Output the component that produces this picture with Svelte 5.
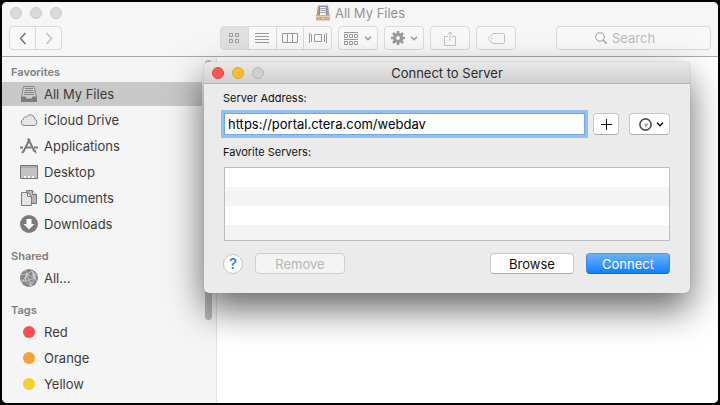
<script>
  let address = $state('https://portal.ctera.com/webdav');
  const favorites = [
    { name: 'All My Files', icon: 'files', selected: true },
    { name: 'iCloud Drive', icon: 'cloud' },
    { name: 'Applications', icon: 'apps' },
    { name: 'Desktop', icon: 'desktop' },
    { name: 'Documents', icon: 'docs' },
    { name: 'Downloads', icon: 'down' }
  ];
  const shared = [{ name: 'All...', icon: 'globe' }];
  const tags = [
    { name: 'Red', color: '#fc4e52' },
    { name: 'Orange', color: '#f8a032' },
    { name: 'Yellow', color: '#f5cf30' }
  ];
</script>

{#snippet icon(name)}
  <svg class="icon" viewBox="0 0 18 18" width="18" height="18" aria-hidden="true">
    {#if name === 'files'}
      <path d="M3.500 1.500h10.500l2.500 10v5H1.500v-5z" fill="#cacaca" stroke="#868686" />
      <path d="M5 3.500h8M5 5.500h8M4 7.500h10M4 9.500h10" stroke="#868686" />
      <path d="M1 11.500h4.500l1 2h5l1-2H17V17H1z" fill="#7d7d7d" />
    {:else if name === 'cloud'}
      <path d="M4 14.500a3.200 3.200 0 0 1-.6-6.200 2.400 2.400 0 0 1 3.300-2.400 4.300 4.300 0 0 1 8 2.400 3.200 3.200 0 0 1-.4 6.200z" fill="#e6e6e6" stroke="#858585" />
    {:else if name === 'apps'}
      <path d="M9.800 2L3 15.500M8 1.500l6.500 13" stroke="#7b7b7b" stroke-width="2" fill="none" />
      <path d="M0 10.500h3M5.500 10.500h6M14 10.500h4" stroke="#7b7b7b" stroke-width="2" />
      <path d="M2 14l-.5 3 2.500-2zM13.500 14l3 3-.5-4z" fill="#7b7b7b" />
    {:else if name === 'desktop'}
      <path d="M.5 2.500h17v13H.5z" fill="#c3c3c3" stroke="#777" />
      <path d="M1 4h16" stroke="#999" />
      <path d="M4 13h2v2H4zM8 13h2v2H8zM12 13h2v2h-2z" fill="#f5f5f5" />
    {:else if name === 'docs'}
      <path d="M6.500 1.500h6l4 4v9h-10z" fill="#b5b5b5" stroke="#7b7b7b" />
      <path d="M12.500 1.500v4h4" fill="#eee" stroke="#7b7b7b" />
      <path d="M1.500 3.500h6l4 4v9h-10z" fill="#e4e4e4" stroke="#7b7b7b" />
      <path d="M7.500 3.500v4h4z" fill="#f6f6f6" stroke="#7b7b7b" />
    {:else if name === 'down'}
      <circle cx="9" cy="9" r="9" fill="#7c7c7c" />
      <path d="M6.500 4h5v5h3L9 14.500 3.500 9h3z" fill="#fff" />
    {:else}
      <circle cx="9" cy="9" r="9" fill="#858585" />
      <path d="M1 6l6-1 8 4M5 1l2 4-2 7-4-1M5 12l6 5 4-8-3-7-5 3 2 6-4 1M9 11l6-2 2 4M9 11l2 6M7 5L2 14M12 2l5 5" stroke="#ddd" stroke-width=".7" fill="none" />
      <path d="M12 4l3 1 1 4-3-1zM5 7l2 1-1 3zM10 12l2 1-1 2z" fill="#c9c9c9" />
    {/if}
  </svg>
{/snippet}

{#snippet chevron()}
  <svg width="8" height="5" viewBox="0 0 8 5" aria-hidden="true"><path d="M1 .8l3 3 3-3" fill="none" stroke="currentColor" stroke-width="1.500" /></svg>
{/snippet}

<div class="screen">
  <main class="finder">
    <header>
      <div class="titlebar">
        <div class="lights"><button aria-label="Close window"></button><button aria-label="Minimize window"></button><button aria-label="Zoom window"></button></div>
        <h1>
          <svg width="16" height="16" viewBox="0 0 16 16" aria-hidden="true">
            <path d="M3 .5h10l1.500 10H1.500z" fill="#b59b80" /><path d="M4.500 1.500h7v9h-7z" fill="#f3f5fa" stroke="#8290a5" />
            <path d="M5 3.500h6M5 5.500h6M5 7.500h6" stroke="#9aa8bd" /><path d="M1 10h14v4.500a1 1 0 0 1-1 1H2a1 1 0 0 1-1-1z" fill="#cfae8a" />
            <path d="M1 11.500h14" stroke="#ead1b2" /><path d="M6 12.500h4v1.500H6z" fill="#fff3dc" stroke="#a98562" stroke-width=".5" />
          </svg>
          <span>All My Files</span>
        </h1>
      </div>
      <div class="toolbar">
        <div class="group nav">
          <button aria-label="Back"><svg width="8" height="13" viewBox="0 0 8 13"><path d="M6.500 1L1.500 6.500l5 5.500" fill="none" stroke="#727272" stroke-width="1.500" /></svg></button>
          <button aria-label="Forward"><svg width="8" height="13" viewBox="0 0 8 13"><path d="M1.500 1l5 5.500-5 5.500" fill="none" stroke="#c2c2c2" stroke-width="1.500" /></svg></button>
        </div>
        <div class="group views">
          <button class="active" aria-label="Icon view"><svg width="10" height="10" viewBox="0 0 10 10"><path d="M.5.5h3v3h-3zM6.500.5h3v3h-3zM.5 6.500h3v3h-3zM6.500 6.500h3v3h-3z" fill="none" stroke="currentColor" /></svg></button>
          <button aria-label="List view"><svg width="14" height="10" viewBox="0 0 14 10"><path d="M0 .5h14M0 3.500h14M0 6.500h14M0 9.500h14" stroke="currentColor" /></svg></button>
          <button aria-label="Column view"><svg width="16" height="10" viewBox="0 0 16 10"><path d="M.5.5h15v9H.5zM5.500.5v9M10.500.5v9" fill="none" stroke="currentColor" /></svg></button>
          <button aria-label="Cover Flow view"><svg width="18" height="10" viewBox="0 0 18 10"><path d="M.5 0v10M2.500 1v8M5.500 1.500h7v7h-7zM15.500 1v8M17.500 0v10" fill="none" stroke="currentColor" /></svg></button>
        </div>
        <button class="tool" aria-label="Arrange">
          <svg width="15" height="13" viewBox="0 0 15 13"><path d="M0 .5h14M0 7.500h14M.5 2.500h3v3h-3zM5.500 2.500h3v3h-3zM10.500 2.500h3v3h-3zM.5 9.500h3v3h-3zM5.500 9.500h3v3h-3zM10.500 9.500h3v3h-3z" fill="none" stroke="currentColor" /></svg>
          {@render chevron()}
        </button>
        <button class="tool" aria-label="Action">
          <svg width="14" height="14" viewBox="0 0 14 14"><circle cx="7" cy="7" r="3.500" fill="none" stroke="currentColor" stroke-width="3.200" /><path d="M7 0v3M7 11v3M0 7h3M11 7h3M2 2l2 2M10 10l2 2M12 2l-2 2M4 10l-2 2" stroke="currentColor" stroke-width="2.600" /></svg>
          {@render chevron()}
        </button>
        <button class="tool faint" aria-label="Share"><svg width="12" height="15" viewBox="0 0 12 15"><path d="M4 5.500H.5v9h11v-9H8M6 10V1M3.500 3.500L6 1l2.500 2.500" fill="none" stroke="currentColor" /></svg></button>
        <button class="tool faint" aria-label="Edit tags"><svg width="17" height="11" viewBox="0 0 17 11"><path d="M5 .5h10.500a1 1 0 0 1 1 1v8a1 1 0 0 1-1 1H5L.8 6.500a1.400 1.400 0 0 1 0-2z" fill="none" stroke="currentColor" /><circle cx="4" cy="5.500" r=".8" fill="currentColor" /></svg></button>
        <label class="search">
          <svg width="12" height="12" viewBox="0 0 12 12" aria-hidden="true"><circle cx="5" cy="5" r="4.300" fill="none" stroke="#9b9b9b" /><path d="M8 8l3.600 3.600" stroke="#9b9b9b" stroke-width="1.300" /></svg>
          <input type="text" placeholder="Search" aria-label="Search" />
        </label>
      </div>
    </header>
    <div class="body">
      <nav>
        <h2>Favorites</h2>
        {#each favorites as item}
          <a href="#{item.icon}" class:selected={item.selected}>{@render icon(item.icon)}{item.name}</a>
        {/each}
        <h2>Shared</h2>
        {#each shared as item}
          <a href="#{item.icon}">{@render icon(item.icon)}{item.name}</a>
        {/each}
        <h2>Tags</h2>
        {#each tags as tag}
          <a href="#{tag.name}"><span class="dot" style:background={tag.color}></span>{tag.name}</a>
        {/each}
      </nav>
      <div class="track"><div class="thumb"></div></div>
      <section aria-label="Files"></section>
    </div>
  </main>

  <form class="dialog" aria-label="Connect to Server" onsubmit={(e) => e.preventDefault()}>
    <div class="dialog-title">
      <div class="lights"><button type="button" class="red" aria-label="Close"></button><button type="button" class="amber" aria-label="Minimize"></button><button type="button" class="off" aria-label="Zoom" disabled></button></div>
      <h1>Connect to Server</h1>
    </div>
    <div class="content">
      <label for="address">Server Address:</label>
      <div class="address-row">
        <input id="address" type="text" bind:value={address} spellcheck="false" />
        <button type="button" class="push add" aria-label="Add to favorites"><svg width="11" height="11" viewBox="0 0 11 11"><path d="M5.500 0v11M0 5.500h11" stroke="#111" /></svg></button>
        <button type="button" class="push recent" aria-label="Recent servers">
          <svg width="13" height="13" viewBox="0 0 13 13"><circle cx="6.500" cy="6.500" r="5.600" fill="none" stroke="#505050" stroke-width="1.600" /><path d="M5.500 6.200h3.500M6.500 6.200v2.300l2-2" stroke="#777" stroke-width=".8" fill="none" /></svg>
          {@render chevron()}
        </button>
      </div>
      <h2 id="favorite-servers">Favorite Servers:</h2>
      <div class="list" role="listbox" tabindex="0" aria-labelledby="favorite-servers"></div>
      <div class="actions">
        <button type="button" class="help" aria-label="Help">?</button>
        <button type="button" class="push" disabled>Remove</button>
        <span class="spacer"></span>
        <button type="button" class="push">Browse</button>
        <button type="submit" class="push primary">Connect</button>
      </div>
    </div>
  </form>
</div>

<style>
  :global(body) { margin: 0; background: #000; }
  .screen { position: relative; box-sizing: border-box; height: 100vh; padding: 2px; overflow: hidden; background: #000; color: #3c3c3c; font: 13px/18px Inter, sans-serif; }
  .screen * { box-sizing: border-box; }
  button, input { margin: 0; padding: 0; font: inherit; color: inherit; }
  h1, h2 { margin: 0; font-weight: 400; }
  svg { flex: none; display: block; }
  .finder { display: flex; flex-direction: column; height: 100%; border-radius: 5px; overflow: hidden; background: #fff; }
  header { flex: none; height: 55px; border-bottom: 1px solid #a8a8a8; background: #f6f6f6; }
  .titlebar { position: relative; height: 24px; padding: 5px 8px; }
  .titlebar h1 { position: absolute; inset: 2px 0 auto; display: flex; align-items: center; justify-content: center; gap: 4px; color: #949494; font-size: 13px; line-height: 18px; }
  .lights { display: flex; gap: 8px; }
  .lights button { width: 12px; height: 12px; border: 1px solid #cacaca; border-radius: 50%; background: #dadada; }
  .lights .red { background: #fc5753; border-color: #e2443f; }
  .lights .amber { background: #fdbc2e; border-color: #e0a128; }
  .lights .off { background: #d0d0d0; border-color: #b8b8b8; }
  .toolbar { display: flex; align-items: center; padding: 0 7px; color: #9a9a9a; }
  .group, .tool, .search { display: flex; height: 24px; border: 1px solid #d9d9d9; border-radius: 4px; background: #f8f8f8; }
  .group { overflow: hidden; }
  .group button { display: grid; place-items: center; flex: 1; border: 0; background: none; }
  .group button + button { border-left: 1px solid #d9d9d9; }
  .nav { width: 53px; margin-right: 158px; }
  .views { width: 112px; }
  .group .active { background: #e0e0e0; }
  .tool { align-items: center; justify-content: center; gap: 5px; width: 40px; margin-left: 6px; }
  .faint { color: #c2c2c2; }
  .search { flex: 1; align-items: center; justify-content: center; gap: 5px; margin-left: 40px; padding-right: 14px; }
  .search input { width: 46px; border: 0; outline: 0; background: none; appearance: none; }
  .search input::placeholder { color: #b8b8b8; opacity: 1; }
  .body { display: flex; flex: 1; min-height: 0; background: #f5f5f5; }
  nav { flex: none; width: 200px; padding-top: 6px; }
  nav h2 { margin: 10px 0 0; padding-left: 9px; color: #808080; font-size: 11px; line-height: 18px; font-weight: 600; }
  nav h2:first-child { margin: 0 0 1px; }
  nav a { display: flex; align-items: center; gap: 6px; height: 26px; padding-left: 18px; color: inherit; text-decoration: none; }
  nav .selected { height: 24px; margin-bottom: 1px; background: #c8c8c8; }
  .dot { width: 12px; height: 12px; margin: 0 3px; border-radius: 50%; }
  .track { flex: none; width: 15px; padding: 3px 4px 0 3px; border-right: 1px solid #e2e2e2; }
  .thumb { height: 260px; border-radius: 4px; background: #bababa; }
  section { flex: 1; background: #fff; }
  .dialog { position: absolute; top: 62px; left: 204px; right: 30px; border-radius: 5px; background: #ebebeb; color: #111; box-shadow: 0 0 1px #777, 0 16px 36px rgba(0, 0, 0, .6); }
  .dialog-title { position: relative; height: 22px; padding: 5px 8px; border-bottom: 1px solid #b5b5b5; border-radius: 5px 5px 0 0; background: linear-gradient(#e8e8e8, #d0d0d0); }
  .dialog-title h1 { position: absolute; inset: 2px 0 auto; text-align: center; font-size: 13px; line-height: 18px; color: #2b2b2b; pointer-events: none; }
  .content { padding: 6px 20px 19px 19px; }
  .content > label, .content > h2 { display: block; color: #111; font-size: 11px; line-height: 16px; }
  .address-row { display: flex; align-items: center; margin: 7px 0 9px; }
  .address-row input { flex: 1; min-width: 0; height: 22px; margin: 0 8px 0 1px; padding: 0 3px; border: 1px solid #73a7e2; outline: 3px solid #91bff5; background: #fff; color: #000; }
  .push { display: flex; align-items: center; justify-content: center; width: 84px; height: 21px; border: 1px solid #c8c8c8; border-bottom-color: #b0b0b0; border-radius: 4px; background: #fff; }
  .add { width: 26px; height: 22px; margin-right: 10px; }
  .recent { width: 41px; height: 22px; gap: 4px; padding-left: 4px; }
  .push:disabled { width: 90px; border-color: #d0d0d0; background: #f3f3f3; color: #b5b5b5; }
  .primary { margin-left: 12px; border-color: #4a9df8 #2f85f6 #1364e8; background: linear-gradient(#6bb3fa, #157efb); color: #fff; }
  .list { height: 74px; margin: 7px 0 12px 1px; border: 1px solid #bdbdbd; background: repeating-linear-gradient(#fff 0 19px, #f4f4f4 19px 38px); }
  .actions { display: flex; align-items: center; }
  .help { width: 20px; height: 20px; margin-right: 12px; border: 1px solid #c4c4c4; border-radius: 50%; background: #fff; color: #1a7dfa; font-size: 15px; font-weight: 500; line-height: 18px; }
  .spacer { flex: 1; }
</style>
